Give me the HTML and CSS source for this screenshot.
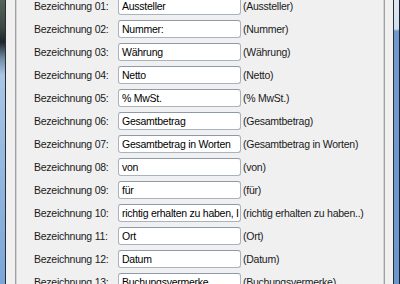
FILE: index.html
```html
<!DOCTYPE html>
<html lang="de">
<head>
  <meta charset="UTF-8" />
  <title>Bezeichnungen</title>
  <link rel="stylesheet" href="styles.css">
</head>
<body>
<div class="window">
  <div class="frame-left"></div>
  <div class="client">
    <div class="panel">
      <div class="rows">
        <div class="row"><span class="label">Bezeichnung 01:</span><span class="field">Aussteller</span><span class="note">(Aussteller)</span></div>
        <div class="row"><span class="label">Bezeichnung 02:</span><span class="field">Nummer:</span><span class="note">(Nummer)</span></div>
        <div class="row"><span class="label">Bezeichnung 03:</span><span class="field">Währung</span><span class="note">(Währung)</span></div>
        <div class="row"><span class="label">Bezeichnung 04:</span><span class="field">Netto</span><span class="note">(Netto)</span></div>
        <div class="row"><span class="label">Bezeichnung 05:</span><span class="field">% MwSt.</span><span class="note">(% MwSt.)</span></div>
        <div class="row"><span class="label">Bezeichnung 06:</span><span class="field">Gesamtbetrag</span><span class="note">(Gesamtbetrag)</span></div>
        <div class="row"><span class="label">Bezeichnung 07:</span><span class="field">Gesamtbetrag in Worten</span><span class="note">(Gesamtbetrag in Worten)</span></div>
        <div class="row"><span class="label">Bezeichnung 08:</span><span class="field">von</span><span class="note">(von)</span></div>
        <div class="row"><span class="label">Bezeichnung 09:</span><span class="field">für</span><span class="note">(für)</span></div>
        <div class="row"><span class="label">Bezeichnung 10:</span><span class="field">richtig erhalten zu haben, I</span><span class="note">(richtig erhalten zu haben..)</span></div>
        <div class="row"><span class="label">Bezeichnung 11:</span><span class="field">Ort</span><span class="note">(Ort)</span></div>
        <div class="row"><span class="label">Bezeichnung 12:</span><span class="field">Datum</span><span class="note">(Datum)</span></div>
        <div class="row"><span class="label">Bezeichnung 13:</span><span class="field">Buchungsvermerke</span><span class="note">(Buchungsvermerke)</span></div>
      </div>
    </div>
  </div>
  <div class="frame-right"></div>
</div>
</body>
</html>
```

FILE: styles.css
```css
/* Fenster */
body {
  margin: 0;
  background: #f0f0f0;
  font-family: "Liberation Sans", Arial, sans-serif;
  font-size: 10.5px;
  letter-spacing: -0.25px;
  color: #1a1a1a;
}

.window {
  display: flex;
  width: 400px;
  height: 284px;
  overflow: hidden;
}

/* Fensterrahmen links und rechts */
.frame-left {
  width: 5px;
  border-right: 1px solid #2a2e30;
  background: linear-gradient(to bottom, #56645a 0, #3c4644 28px, #1e2528 42px, #6f8aa4 58px, #a9c6e6 75px, #7aa6d8 100%);
}

.frame-right {
  width: 5px;
  border-left: 1px solid #2a2e30;
  border-right: 1px solid #1c2024;
  background: linear-gradient(to bottom, #dfe9f4 0, #cfdff0 29px, #7099cf 31px, #6b97cf 100%);
}

.client {
  flex: 1;
  display: flex;
  background: #f0f0f0;
}

/* Innerer Bereich mit Rahmenlinien */
.panel {
  flex: 1;
  margin: 0 8px 0 9px;
  border-left: 1px solid #a0a0a0;
  border-right: 1px solid #a0a0a0;
  box-shadow: inset 1px 0 0 #d4d4d4, inset -1px 0 0 #d4d4d4;
  overflow: hidden;
}

.rows {
  display: flex;
  flex-direction: column;
  gap: 5px;
  margin-top: -3px;
  padding-left: 18px;
}

.row {
  display: flex;
  align-items: center;
  height: 18px;
}

.label {
  width: 84px;
  white-space: nowrap;
}

.field {
  box-sizing: border-box;
  width: 123px;
  height: 18px;
  line-height: 16px;
  padding: 0 3px;
  border: 1px solid #a9b2bf;
  border-top-color: #8e9aab;
  border-radius: 3px;
  background: #fff;
  color: #000;
  white-space: nowrap;
  overflow: hidden;
}

.note {
  margin-left: 2px;
  white-space: nowrap;
}
```
